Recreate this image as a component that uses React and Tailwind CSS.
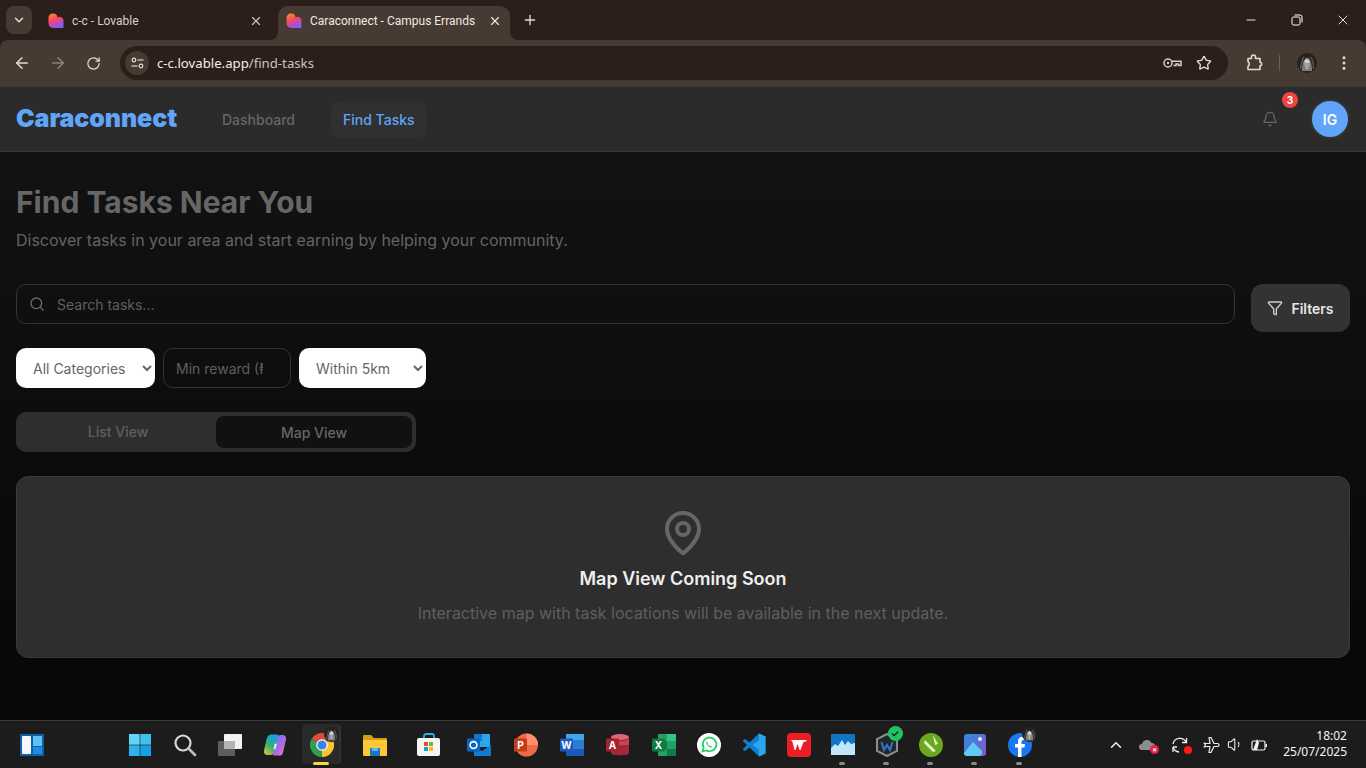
import React from "react";
import { Search, Filter, MapPin, Bell, ChevronDown, X, Plus, ArrowLeft, ArrowRight, RotateCw, Star, EllipsisVertical, Minus, ChevronUp, Volume1 } from "lucide-react";

function Heart({ id }) {
  return (
    <svg width="16" height="16" viewBox="0 0 16 16" className="shrink-0">
      <defs>
        <linearGradient id={id} x1="0.2" y1="0" x2="0.6" y2="1">
          <stop offset="0" stopColor="#ff8a1e" />
          <stop offset="0.45" stopColor="#f8456c" />
          <stop offset="1" stopColor="#7a5cff" />
        </linearGradient>
      </defs>
      <path d="M5 0.5a4.6 4.6 0 0 1 4.6 4.3 3.5 3.5 0 0 1 5.9 2.6V15H5A4.7 4.7 0 0 1 0.5 10.300V5A4.500 4.500 0 0 1 5 0.500z" fill={`url(#${id})`} />
    </svg>
  );
}

function Avatar({ size = 20 }) {
  return (
    <svg width={size} height={size} viewBox="0 0 20 20">
      <circle cx="10" cy="10" r="10" fill="#26221f" />
      <path d="M5 18c0-7 1.500-12 5-13.500 3.500 1 5 6.500 5 13.500z" fill="#7d7d7d" />
      <path d="M7.500 8c1-2.500 4-2.500 5 0l-.5 6-2 2.500-2-2.500z" fill="#d2d2d2" />
      <path d="M3.500 16c1-5 1-9 3.500-12M16.500 16c0-5 0-9-3-12" stroke="#555" strokeWidth="1.500" fill="none" />
      <path d="M9 10v5M11 10v5" stroke="#555" strokeWidth="0.800" />
    </svg>
  );
}

const taskIcons = [
  ["w-[45px]", "start"], ["w-[45px]", "search"], ["w-[45px]", "view"], ["w-[45px]", "copilot"],
  ["w-[45px] ml-[2px]", "chrome"], ["w-[45px] ml-[8px]", "files"], ["w-[45px] ml-[9px]", "store"],
  ["w-[45px] ml-[5px]", "outlook"], ["w-[45px] ml-[2px]", "ppt"], ["w-[45px] ml-[1px]", "word"],
  ["w-[45px] ml-[1px]", "access"], ["w-[45px] ml-[1px]", "excel"], ["w-[45px]", "whatsapp"],
  ["w-[45px]", "vscode"], ["w-[45px]", "wps"], ["w-[45px] -ml-[1px]", "wave", true],
  ["w-[45px] -ml-[1px]", "w", true], ["w-[45px] -ml-[1px]", "corel", true],
  ["w-[45px] -ml-[1px]", "photos", true], ["w-[45px]", "fb", true],
];

function TaskGlyph({ name }) {
  const s = { width: 24, height: 24, viewBox: "0 0 24 24" };
  switch (name) {
    case "start":
      return <svg {...s}><rect x="1" y="1" width="10.700" height="10.700" fill="#5fd4f7" /><rect x="12.300" y="1" width="10.700" height="10.700" fill="#3fc0f0" /><rect x="1" y="12.300" width="10.700" height="10.700" fill="#2cb2ec" /><rect x="12.300" y="12.300" width="10.700" height="10.700" fill="#17a0e4" /></svg>;
    case "search":
      return <svg {...s} fill="none"><circle cx="10" cy="10" r="7.500" stroke="#d8d8d8" strokeWidth="2.200" /><path d="M15.500 15.500L22 22" stroke="#bdbdbd" strokeWidth="2.600" strokeLinecap="round" /></svg>;
    case "view":
      return <svg {...s}><rect x="0" y="8" width="17" height="15" rx="1" fill="#5e5e5e" /><rect x="6" y="1" width="18" height="15" rx="1" fill="#f3f3f3" /><rect x="6" y="8" width="11" height="8" fill="#b4b4b4" /></svg>;
    case "copilot":
      return (
        <svg {...s} fill="none">
          <defs>
            <linearGradient id="cp1" x1="0" y1="1" x2="0.6" y2="0"><stop offset="0" stopColor="#f6c32d" /><stop offset="0.5" stopColor="#35b56b" /><stop offset="1" stopColor="#1b9de2" /></linearGradient>
            <linearGradient id="cp2" x1="0" y1="0" x2="1" y2="1"><stop offset="0" stopColor="#3f8cf0" /><stop offset="0.6" stopColor="#b867e0" /><stop offset="1" stopColor="#f08dc0" /></linearGradient>
          </defs>
          <path d="M8 1.500h6c1.500 0 1.500 1.200 1 2.500l-4 15c-.5 2-1.500 3-3.500 3H5c-3 0-4.500-2-4-4.500l2.500-11C4 3.500 6 1.500 8 1.500z" fill="url(#cp1)" />
          <path d="M17 22.500h-6c-1.500 0-1.500-1.200-1-2.500l4-15c.5-2 1.500-3 3.500-3H19c3 0 4.500 2 4 4.500l-2.500 11c-.5 3-1.500 5-3.500 5z" fill="url(#cp2)" />
          <path d="M11.500 11c1-.5 2-.5 2.500 0l-1.500 5-2 .5z" fill="#fff" opacity="0.800" />
        </svg>
      );
    case "chrome":
      return (
        <svg {...s}>
          <path d="M12 12L1.600 6A12 12 0 0 1 22.400 6z" fill="#e24a3b" />
          <path d="M12 12L22.400 6A12 12 0 0 1 12 24z" fill="#fbc531" />
          <path d="M12 12L12 24A12 12 0 0 1 1.600 6z" fill="#2f9e4f" />
          <circle cx="12" cy="12" r="5.800" fill="#fff" />
          <circle cx="12" cy="12" r="4.600" fill="#3b82e6" />
        </svg>
      );
    case "files":
      return <svg {...s}><path d="M0 3a1 1 0 0 1 1-1h7l3 3h12a1 1 0 0 1 1 1v4H0z" fill="#d79a16" /><path d="M0 7h24v15a1 1 0 0 1-1 1H1a1 1 0 0 1-1-1z" fill="#fcc934" /><rect x="7" y="15" width="10" height="8" rx="1" fill="#1677c9" /><rect x="9" y="15" width="6" height="3" fill="#5bb5ee" /></svg>;
    case "store":
      return <svg {...s}><path d="M7 5V3a2 2 0 0 1 2-2h6a2 2 0 0 1 2 2v2" stroke="#25b4e8" strokeWidth="1.800" fill="none" /><rect x="0" y="5" width="23" height="18" rx="2" fill="#f4f4f4" /><rect x="7" y="9" width="4" height="4" fill="#ea4c2c" /><rect x="12" y="9" width="4" height="4" fill="#70b82c" /><rect x="7" y="14" width="4" height="4" fill="#1c9ae2" /><rect x="12" y="14" width="4" height="4" fill="#fbbc09" /></svg>;
    case "outlook":
      return <svg {...s}><rect x="7" y="1" width="16" height="13" fill="#28a8ea" /><rect x="7" y="1" width="8" height="7" fill="#0f78d4" /><path d="M7 13l8 5 9-6v11H7z" fill="#0f7bd2" /><rect x="0" y="5.500" width="13" height="13" rx="1" fill="#0a66c0" /><circle cx="6.500" cy="12" r="3.400" fill="none" stroke="#fff" strokeWidth="1.700" /></svg>;
    case "ppt":
      return <svg {...s}><circle cx="12.500" cy="12" r="11.500" fill="#ed6c47" /><path d="M12.500 0.500A11.500 11.500 0 0 1 24 12H12.500z" fill="#ff8f6b" /><rect x="0" y="5.500" width="13" height="13" rx="1" fill="#c43e1c" /><text x="6.500" y="16" textAnchor="middle" fontSize="10" fontWeight="700" fill="#fff" fontFamily="Inter">P</text></svg>;
    case "word":
      return <svg {...s}><rect x="6" y="1" width="18" height="22" rx="1" fill="#2b7cd3" /><rect x="6" y="1" width="18" height="6" fill="#41a5ee" /><rect x="6" y="16" width="18" height="7" fill="#185abd" /><rect x="0" y="5.500" width="13" height="13" rx="1" fill="#1a5bbd" /><text x="6.500" y="16" textAnchor="middle" fontSize="10" fontWeight="700" fill="#fff" fontFamily="Inter">W</text></svg>;
    case "access":
      return <svg {...s}><path d="M5 4c0-2 18-2 18 0v16c0 3-18 3-18 0z" fill="#a4283a" /><ellipse cx="14" cy="4" rx="9" ry="3" fill="#e0637a" /><path d="M5 6c4 3 14 3 18 0v6H5z" fill="#c8425a" /><rect x="0" y="5.500" width="13" height="13" rx="1" fill="#a4262c" /><text x="6.500" y="16" textAnchor="middle" fontSize="10" fontWeight="700" fill="#fff" fontFamily="Inter">A</text></svg>;
    case "excel":
      return <svg {...s}><rect x="6" y="1" width="18" height="22" rx="1" fill="#21a366" /><rect x="15" y="1" width="9" height="7" fill="#33c481" /><rect x="6" y="8" width="9" height="8" fill="#107c41" /><rect x="15" y="16" width="9" height="7" fill="#107c41" /><rect x="0" y="5.500" width="13" height="13" rx="1" fill="#107c41" /><text x="6.500" y="16" textAnchor="middle" fontSize="10" fontWeight="700" fill="#fff" fontFamily="Inter">X</text></svg>;
    case "whatsapp":
      return <svg {...s}><circle cx="12" cy="12" r="12" fill="#fff" /><path d="M5.500 18.500l1.100-3.800A6.800 6.800 0 1 1 9.300 17.400z" fill="none" stroke="#25d366" strokeWidth="1.800" /><path d="M9.500 8.500c-1 1 0 3 1.500 4.500s3 2 4 1l-1.500-1.500-1 .5-2-2 .5-1z" fill="#25d366" /></svg>;
    case "vscode":
      return <svg {...s}><path d="M17 0.500L7.500 9.500 3 6 0.500 7.500 5 12 0.500 16.500 3 18 7.500 14.500 17 23.500 23.500 20.500V3.500z" fill="#0f7fcf" /><path d="M17 0.500L23.500 3.500V20.500L17 23.500V17L10.500 12 17 7z" fill="#2aa5ee" /></svg>;
    case "wps":
      return <svg {...s}><rect width="24" height="24" rx="4" fill="#ee1c25" /><path d="M4 7h16l-2 2h-1.500l-3 8h-1l-.5-2-1.500-4-2 6h-1L5.500 9z" fill="#fff" /></svg>;
    case "wave":
      return <svg {...s}><rect y="1" width="24" height="21" rx="1" fill="#1174c5" /><path d="M0 15l4-4 3 2 4-6 3 5 3-4 3 3 4-1v12H0z" fill="#bfe7f9" /></svg>;
    case "w":
      return <svg {...s}><path d="M12 1l10 5v12l-10 5-10-5V6z" fill="#23262b" stroke="#8a8f96" strokeWidth="2" /><path d="M6.500 9l2.500 8 3-5 3 5 2.500-8" stroke="#2f77c5" strokeWidth="2" fill="none" /></svg>;
    case "corel":
      return <svg {...s}><circle cx="12" cy="12" r="12" fill="#6aa81e" /><path d="M6 7l11 11-3 1-9-9zM14 2l5 9-3 1z" fill="#e9f3c8" /></svg>;
    case "photos":
      return <svg {...s}><defs><linearGradient id="ph" x1="0" y1="0" x2="1" y2="1"><stop offset="0" stopColor="#2a8fe0" /><stop offset="1" stopColor="#8b52c9" /></linearGradient></defs><rect x="1" y="1" width="22" height="22" rx="3" fill="url(#ph)" /><circle cx="17" cy="6" r="2" fill="#dff3fb" /><path d="M1 20l9-11 5 5 4 4v2a3 3 0 0 1-3 3H4a3 3 0 0 1-3-3z" fill="#60c9f5" /></svg>;
    case "fb":
      return <svg {...s}><circle cx="12" cy="12" r="12" fill="#1877f2" /><path d="M13.500 24v-9.500h3l.5-3.500h-3.500V9c0-1.200.5-2 2-2H17V4c-.7-.1-1.500-.2-2.500-.2-2.800 0-4.500 1.700-4.500 4.500V11H7v3.500h3V24z" fill="#fff" /></svg>;
    default:
      return null;
  }
}

function TaskItem({ cls, name, dot }) {
  const active = name === "chrome";
  return (
    <div className={`${cls} h-[42px] flex items-center justify-center relative shrink-0`}>
      {active && <div className="absolute left-[3px] top-0 w-[39px] h-[40px] rounded-[4px] bg-[#2a2a2a] border-r-2 border-[#333]" />}
      <div className="relative flex">
        <TaskGlyph name={name} />
        {(name === "chrome" || name === "fb") && <div className="absolute -right-[5px] -top-[6px] flex"><Avatar size={15} /></div>}
        {name === "w" && (
          <div className="absolute -right-[4px] -top-[7px] w-[15px] h-[15px] rounded-full bg-[#1ec45c] flex items-center justify-center text-[10px] font-bold text-[#123]">✓</div>
        )}
      </div>
      {active && <div className="absolute left-[14px] bottom-[1px] w-[16px] h-[3px] rounded-full bg-[#fcd53f]" />}
      {dot && <div className="absolute left-[19px] bottom-[1px] w-[6px] h-[3px] rounded-full bg-[#8a8a8a]" />}
    </div>
  );
}

export default function App() {
  return (
    <div className="w-[1366px] h-[768px] overflow-hidden flex flex-col font-['Inter',sans-serif] bg-[#2a1f1a]">
      {/* tab strip */}
      <div className="h-[40px] shrink-0 bg-[#2a1f1a] flex items-end relative font-['Roboto',sans-serif]">
        <div className="absolute left-[6px] top-[6px] w-[26px] h-[28px] rounded-[8px] bg-[#463a33] flex items-center justify-center">
          <ChevronDown size={14} color="#ead9cf" strokeWidth={2.5} />
        </div>
        <div className="ml-[40px] w-[231px] h-[34px] pb-[5px] flex items-center pl-[8px] pr-[8px] text-[12px] text-[#d9cec8]">
          <Heart id="h1" />
          <span className="ml-[8px] flex-1">c-c - Lovable</span>
          <X size={14} color="#d8ccc6" strokeWidth={2} />
        </div>
        <div className="ml-[7px] w-[232px] h-[34px] pb-[5px] rounded-t-[10px] bg-[#463a33] flex items-center pl-[8px] pr-[8px] text-[12px] text-[#f0e8e3] relative">
          <svg width="8" height="8" viewBox="0 0 8 8" className="absolute -left-[8px] bottom-0"><path d="M8 0v8H0a8 8 0 0 0 8-8z" fill="#463a33" /></svg>
          <svg width="8" height="8" viewBox="0 0 8 8" className="absolute -right-[8px] bottom-0"><path d="M0 0v8h8a8 8 0 0 1-8-8z" fill="#463a33" /></svg>
          <Heart id="h2" />
          <span className="ml-[8px] flex-1 overflow-hidden whitespace-nowrap">Caraconnect - Campus Errands</span>
          <X size={14} color="#f0e8e3" strokeWidth={2} className="ml-[8px] shrink-0" />
        </div>
        <Plus size={16} color="#e6dbd5" strokeWidth={2} className="ml-[12px] mb-[12px]" />
        <div className="ml-auto flex items-center h-[40px]">
          <div className="w-[46px] flex justify-center"><Minus size={14} color="#fff" strokeWidth={1.500} /></div>
          <div className="w-[46px] flex justify-center">
            <svg width="12" height="12" viewBox="0 0 12 12" fill="none" stroke="#fff" strokeWidth="1"><rect x="1" y="3" width="8" height="8" rx="1.500" /><path d="M3.500 1h5.500a2 2 0 0 1 2 2v5.500" /></svg>
          </div>
          <div className="w-[46px] flex justify-center"><X size={16} color="#fff" strokeWidth={1.300} /></div>
        </div>
      </div>
      {/* toolbar */}
      <div className="h-[47px] shrink-0 bg-[#463a33] flex items-center rounded-t-[8px] border-b border-[#3c3a39]">
        <div className="w-[113px] pl-[13px] flex items-center gap-[18px] shrink-0">
          <ArrowLeft size={18} color="#e6dbd5" strokeWidth={2} />
          <ArrowRight size={18} color="#8f837c" strokeWidth={2} />
          <RotateCw size={15} color="#e6dbd5" strokeWidth={2} className="ml-px" />
        </div>
        <div className="ml-[7px] w-[1108px] h-[34px] rounded-full bg-[#2a1f1a] flex items-center pl-[5px] pr-[16px] font-['Noto_Sans',sans-serif]">
          <div className="w-[24px] h-[24px] rounded-full bg-[#463a33] flex items-center justify-center">
            <svg width="13" height="12" viewBox="0 0 13 12" fill="none" stroke="#ead9cf" strokeWidth="1.200">
              <circle cx="3" cy="3" r="1.800" /><path d="M6.500 3H12.500" />
              <circle cx="10" cy="9" r="1.800" /><path d="M0.500 9H6.500" />
            </svg>
          </div>
          <span className="ml-[8px] text-[13.200px] text-[#f5eee9] translate-y-px">c-c.lovable.app<span className="text-[#cfc3bc]">/find-tasks</span></span>
          <div className="ml-auto flex items-center gap-[14px]">
            <svg width="19" height="12" viewBox="0 0 19 12" fill="none" stroke="#d8ccc6" strokeWidth="1.500">
              <circle cx="5" cy="6" r="4" /><circle cx="5" cy="6" r="1.200" fill="#d8ccc6" stroke="none" />
              <path d="M9 4.300H18V8.500H15.500V7H13V8.500H10.500" />
            </svg>
            <Star size={16} color="#e6dbd5" strokeWidth={2} />
          </div>
        </div>
        <svg width="18" height="18" viewBox="0 0 18 18" fill="none" stroke="#e6dbd5" strokeWidth="1.600" className="ml-[17px]">
          <path d="M3 4.500h3.500V3a2 2 0 0 1 4 0v1.500H15v3.800h.5a1.800 1.800 0 0 1 0 3.400H15V15.500H3v-3.300a2.500 2.500 0 0 0 0-4.400z" strokeLinejoin="round" />
        </svg>
        <div className="ml-[16px] w-px h-[16px] bg-[#6b5f58]" />
        <div className="ml-[17px] flex"><Avatar size={20} /></div>
        <EllipsisVertical size={18} color="#e6dbd5" strokeWidth={2} className="ml-[18px]" />
      </div>
      {/* app header */}
      <header className="h-[65px] shrink-0 bg-[#2b2b2b] border-b border-[#3a3a3a] flex items-center px-4">
        <div className="font-black text-[25px] tracking-[-0.1px] text-[#60a5fa] w-[162px] whitespace-nowrap">Caraconnect</div>
        <nav className="ml-8 flex gap-6">
          <div className="px-3 py-2 rounded-[10px] text-[14px] font-medium text-[#666]">Dashboard</div>
          <div className="px-3 py-2 rounded-[10px] text-[14px] font-medium text-[#60a5fa] bg-[#303030]">Find Tasks</div>
        </nav>
        <div className="ml-auto flex items-center">
          <div className="relative w-[16px] h-[16px] flex mr-[34px]">
            <Bell size={16} color="#666" strokeWidth={2} />
            <div className="absolute left-[20px] -top-[19px] w-[16px] h-[16px] rounded-full bg-[#ef4444] text-white text-[10px] font-bold flex items-center justify-center">3</div>
          </div>
          <div className="w-9 h-9 mr-[2px] rounded-full bg-[#60a5fa] ring-2 ring-[#333] flex items-center justify-center text-white text-[14px] font-semibold">IG</div>
        </div>
      </header>
      {/* main */}
      <main className="flex-1 min-h-0 bg-gradient-to-b from-[#121212] to-[#070707] px-4 py-8">
        <h1 className="text-[30px] leading-9 font-bold text-[#666] mb-2">Find Tasks Near You</h1>
        <p className="text-base leading-6 text-[#646464] mb-8">Discover tasks in your area and start earning by helping your community.</p>
        <div className="flex gap-4 items-start mb-4">
          <div className="flex-1 h-10 rounded-[10px] border border-[#333] flex items-center pl-[12px]">
            <Search size={16} color="#6b6b6b" strokeWidth={2} />
            <input readOnly placeholder="Search tasks..." className="ml-3 flex-1 bg-transparent outline-none text-[14px] placeholder:text-[#5f5f5f]" />
          </div>
          <button className="w-[99px] h-12 rounded-[12px] bg-[#333] flex items-center justify-center gap-2 text-[14px] font-semibold text-[#e8e8e8]">
            <Filter size={16} color="#cfcfcf" strokeWidth={2} />
            Filters
          </button>
        </div>
        <div className="flex gap-2 mb-6">
          <select className="w-[139px] h-10 rounded-[10px] bg-white text-[#666] text-[14px] pl-[13px] pr-1 outline-none">
            <option>All Categories</option>
          </select>
          <input readOnly placeholder="Min reward (₦)" className="w-[128px] h-10 rounded-[10px] border border-[#333] bg-transparent pl-3 pr-[27px] text-[14px] outline-none placeholder:text-[#5f5f5f]" />
          <select className="w-[127px] h-10 rounded-[10px] bg-white text-[#666] text-[14px] pl-[13px] pr-1 outline-none">
            <option>Within 5km</option>
          </select>
        </div>
        <div className="w-[400px] h-10 rounded-[10px] bg-[#2e2e2e] p-1 flex mb-6">
          <div className="flex-1 flex items-center justify-center text-[14px] font-medium text-[#5f5f5f] -translate-y-px">List View</div>
          <div className="flex-1 flex items-center justify-center rounded-[8px] bg-[#111] text-[14px] font-medium text-[#666]">Map View</div>
        </div>
        <section className="rounded-[12px] bg-[#2e2e2e] border border-[#3a3a3a] py-8 flex flex-col items-center">
          <MapPin size={48} color="#666" strokeWidth={2} className="mb-2" />
          <h3 className="text-lg leading-7 font-semibold text-[#eeeeee] mb-2">Map View Coming Soon</h3>
          <p className="text-base leading-6 text-[#5f5f5f]">Interactive map with task locations will be available in the next update.</p>
        </section>
      </main>
      {/* taskbar */}
      <footer className="h-[48px] shrink-0 bg-[#1c1c1c] border-t border-[#3a3a3a] flex items-center relative">
        <div className="ml-[20px] w-[24px] flex shrink-0">
          <svg width="24" height="22" viewBox="0 0 24 22"><rect width="24" height="22" fill="#0f5fae" /><rect x="2" y="2" width="9" height="18" rx="1" fill="#f7f7f7" /><rect x="13" y="2" width="9" height="10" fill="#5dc3f4" /><rect x="13" y="13" width="9" height="7" fill="#1b8fe0" /></svg>
        </div>
        <div className="ml-[73px] flex items-center">
          {taskIcons.map(([cls, name, dot]) => <TaskItem key={name} cls={cls} name={name} dot={dot} />)}
        </div>
        <div className="ml-auto flex items-center pr-[19px]">
          <ChevronUp size={18} color="#f0f0f0" strokeWidth={2} />
          <div className="ml-[14px] relative flex">
            <svg width="16" height="12" viewBox="0 0 16 12"><path d="M3 11a3 3 0 0 1 0-6 5 5 0 0 1 9.500-1A3.500 3.500 0 0 1 13 11z" fill="#8d8d8d" /></svg>
            <div className="absolute -right-[4px] -bottom-[3px] w-[9px] h-[9px] rounded-full bg-[#e0263c] text-white text-[7px] leading-[9px] text-center font-bold">×</div>
          </div>
          <div className="ml-[16px] relative flex">
            <svg width="18" height="18" viewBox="0 0 18 18" fill="none" stroke="#f0f0f0" strokeWidth="1.300">
              <path d="M2 8a7 7 0 0 1 13-2" /><path d="M15.500 2v4.500H11" />
              <path d="M2 11v5M2 11h4" /><path d="M2 11a7 7 0 0 0 6 5" />
            </svg>
            <div className="absolute -right-[3px] bottom-0 w-[8px] h-[8px] rounded-full bg-[#ff1a1a]" />
          </div>
          <svg width="18" height="18" viewBox="0 0 18 18" fill="none" stroke="#f0f0f0" strokeWidth="1.200" className="ml-[14px]">
            <path d="M1 7l1.500 2L1 11l3-.5h3l-1 6h2l3-6h3.500a1.500 1.500 0 0 0 0-3H11l-3-6H6l1 6H4z" strokeLinejoin="round" />
          </svg>
          <Volume1 size={17} color="#f0f0f0" strokeWidth={1.500} className="ml-[6px]" />
          <svg width="18" height="14" viewBox="0 0 18 14" fill="none" className="ml-[6px]"><rect x="2" y="3" width="13" height="9" rx="1.500" stroke="#f0f0f0" strokeWidth="1.200" /><rect x="15.500" y="6" width="1.500" height="3" fill="#f0f0f0" /><path d="M3 12L7 1l2 4-2 7z" fill="#f0f0f0" /></svg>
          <div className="ml-[15px] flex flex-col items-end text-[12px] leading-[16px] text-[#f5f5f5] font-['Noto_Sans',sans-serif] -mt-px">
            <span>18:02</span>
            <span>25/07/2025</span>
          </div>
        </div>
      </footer>
    </div>
  );
}
